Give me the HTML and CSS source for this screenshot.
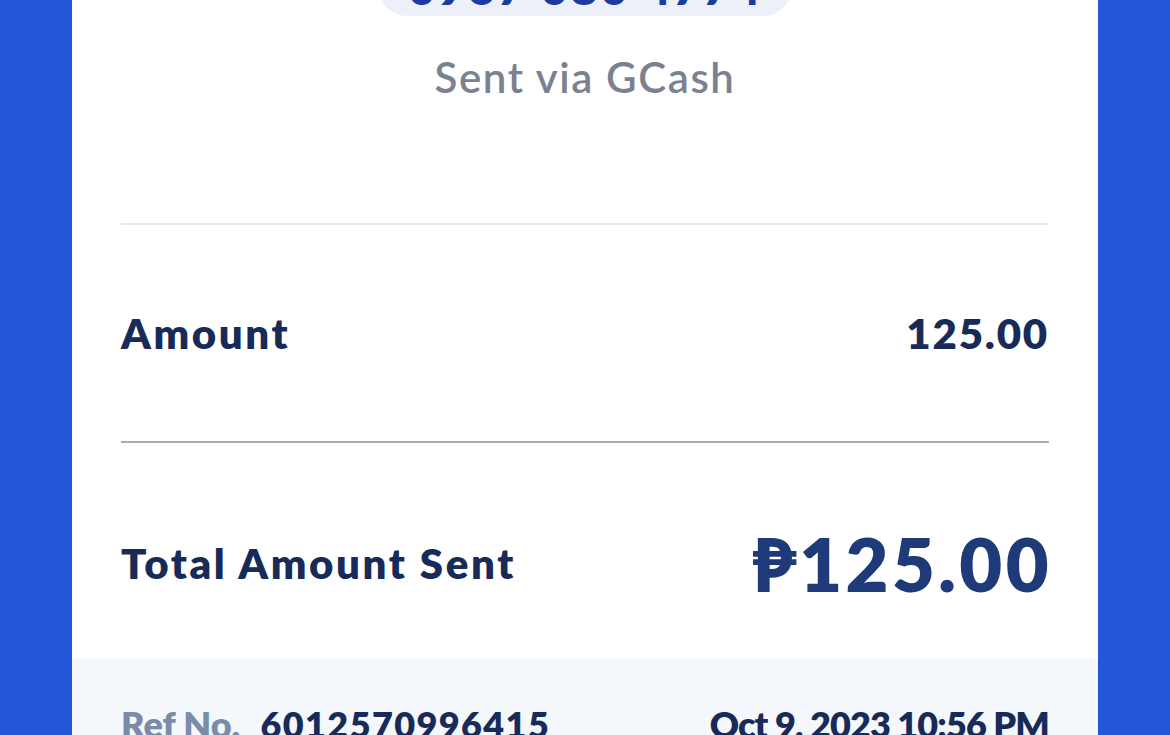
FILE: index.html
```html
<!DOCTYPE html>
<html lang="en">
<head>
    <meta charset="UTF-8">
    <meta name="viewport" content="width=device-width, initial-scale=1.0">
    <title>GCash Receipt</title>
    <link rel="stylesheet" href="styles.css">
</head>
<body>
    <div class="receipt">
        <div class="head">
            <div class="number-pill">0967 080 4774</div>
            <p class="via">Sent via GCash</p>
        </div>
        <div class="details">
            <div class="row">
                <span class="label">Amount</span>
                <span class="value">125.00</span>
            </div>
            <div class="row total">
                <span class="label">Total Amount Sent</span>
                <span class="value">&#8369;125.00</span>
            </div>
        </div>
        <div class="footer">
            <div class="ref">
                <span class="ref-label">Ref No.</span>
                <span class="ref-num">6012570996415</span>
            </div>
            <span class="date">Oct 9, 2023 10:56 PM</span>
        </div>
    </div>
</body>
</html>
```

FILE: styles.css
```css
body {
    margin: 0;
    background-color: #2456d8;
    font-family: "Lato", "Noto Sans", sans-serif;
    overflow: hidden;
}
.receipt {
    width: 1026px;
    margin: 0 auto;
    background-color: #fff;
    min-height: 800px;
}
.head {
    display: flex;
    flex-direction: column;
    align-items: center;
    padding-bottom: 121px;
}
.number-pill {
    margin-top: -46px;
    width: 416px;
    height: 62px;
    box-sizing: border-box;
    padding-top: 4px;
    border-radius: 31px;
    background-color: #edf0f8;
    color: #1c3aa0;
    font-size: 48px;
    font-weight: 800;
    letter-spacing: 2px;
    display: flex;
    align-items: center;
    justify-content: center;
    line-height: 1;
}
.via {
    margin: 36px 0 0;
    font-size: 42px;
    font-weight: 600;
    color: #7b8190;
    letter-spacing: 1.6px;
}
.details {
    margin: 0 49px;
    border-top: 2px solid #e9e9ea;
}
.row {
    display: flex;
    justify-content: space-between;
    align-items: center;
    height: 216px;
    color: #172a58;
}
.row .label {
    font-size: 42px;
    font-weight: 800;
    letter-spacing: 2.6px;
}
.row .value {
    font-size: 42px;
    font-weight: 800;
    letter-spacing: 1.8px;
}
.total {
    border-top: 2px solid #a9aab3;
    height: 192px;
    padding-top: 24px;
}
.total .value {
    font-size: 74px;
    color: #1e3a78;
    letter-spacing: 3.4px;
    margin-right: -3px;
}
.footer {
    background-color: #f4f7fc;
    display: flex;
    justify-content: space-between;
    align-items: flex-start;
    padding: 43px 49px 30px;
    height: 100px;
    font-size: 36px;
    font-weight: 800;
}
.ref-label {
    color: #7c8ba8;
    margin-right: 12px;
}
.ref-num {
    color: #172a58;
    letter-spacing: 1.4px;
}
.date {
    color: #172a58;
    letter-spacing: -0.9px;
}
```
